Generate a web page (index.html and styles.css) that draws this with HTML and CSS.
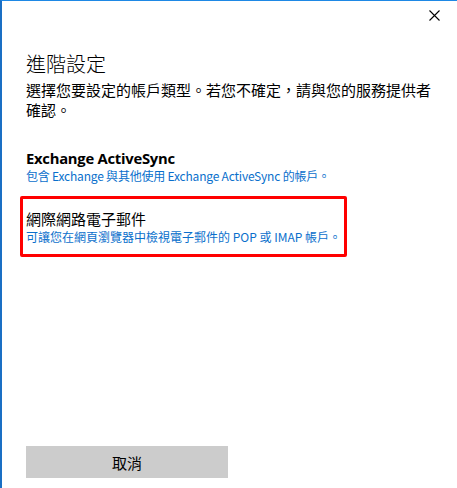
FILE: index.html
```html
<!DOCTYPE html>
<html lang="zh-Hant">
<head>
  <meta charset="UTF-8" />
  <title>進階設定</title>
  <link rel="stylesheet" href="styles.css">
</head>
<body>
  <div class="dialog">
    <!-- 標題列 -->
    <div class="title-bar">
      <button class="close-btn" aria-label="關閉">
        <svg width="11" height="11" viewBox="0 0 11 11">
          <path d="M0.5 0.5 L10.5 10.5 M10.5 0.5 L0.5 10.5" stroke="#000" stroke-width="1.1" fill="none" />
        </svg>
      </button>
    </div>

    <div class="content">
      <h1 class="heading">進階設定</h1>
      <p class="intro">選擇您要設定的帳戶類型。若您不確定，請與您的服務提供者確認。</p>

      <div class="option">
        <div class="option-title latin">Exchange ActiveSync</div>
        <div class="option-desc tight">包含 Exchange 與其他使用 Exchange ActiveSync 的帳戶。</div>
      </div>

      <div class="option selected">
        <div class="option-title">網際網路電子郵件</div>
        <div class="option-desc">可讓您在網頁瀏覽器中檢視電子郵件的 POP 或 IMAP 帳戶。</div>
      </div>
    </div>

    <div class="footer">
      <button class="cancel-btn">取消</button>
    </div>
  </div>
</body>
</html>
```

FILE: styles.css
```css
/* 公用樣式 */
* {
  box-sizing: border-box;
  margin: 0;
  padding: 0;
}
body {
  font-family: "Noto Sans CJK TC", "Noto Sans", sans-serif;
  background: #fff;
  color: #000;
}

.dialog {
  height: 488px;
  display: flex;
  flex-direction: column;
  border-top: 1px solid #1e88e5;
  border-left: 2px solid #1a6fc4;
}

/* 標題列 */
.title-bar {
  height: 31px;
  display: flex;
  justify-content: flex-end;
  align-items: flex-start;
  padding: 9px 17px 0 0;
}
.close-btn {
  border: none;
  background: none;
  width: 11px;
  height: 11px;
  display: flex;
}

/* 內容 */
.content {
  flex: 1;
  padding: 19px 20px 0 24px;
}
.heading {
  font-size: 20px;
  font-weight: 300;
  line-height: 26px;
  margin-bottom: 3px;
}
.intro {
  font-size: 15px;
  line-height: 20px;
  margin-bottom: 28px;
}

.option {
  margin-left: -6px;
  padding: 0 6px;
  width: 327px;
}
.option-title {
  font-size: 15px;
  line-height: 20px;
}
.option-title.latin {
  font-family: "Open Sans", "Noto Sans", sans-serif;
  font-weight: 700;
  font-size: 14.8px;
  letter-spacing: -0.25px;
}
.option-desc {
  font-size: 12px;
  line-height: 16px;
  color: #0a6fcc;
}
.option-desc.tight {
  letter-spacing: -0.2px;
}

.option.selected {
  margin-top: 12px;
  border: 3px solid #ff0000;
  border-radius: 2px;
  padding: 10px 3px 9px 3px;
}

/* 底部按鈕 */
.footer {
  padding: 0 0 10px 24px;
}
.cancel-btn {
  width: 202px;
  height: 32px;
  border: none;
  background: #cccccc;
  font-family: "Noto Sans CJK TC", sans-serif;
  font-size: 15px;
  color: #000;
}
```
